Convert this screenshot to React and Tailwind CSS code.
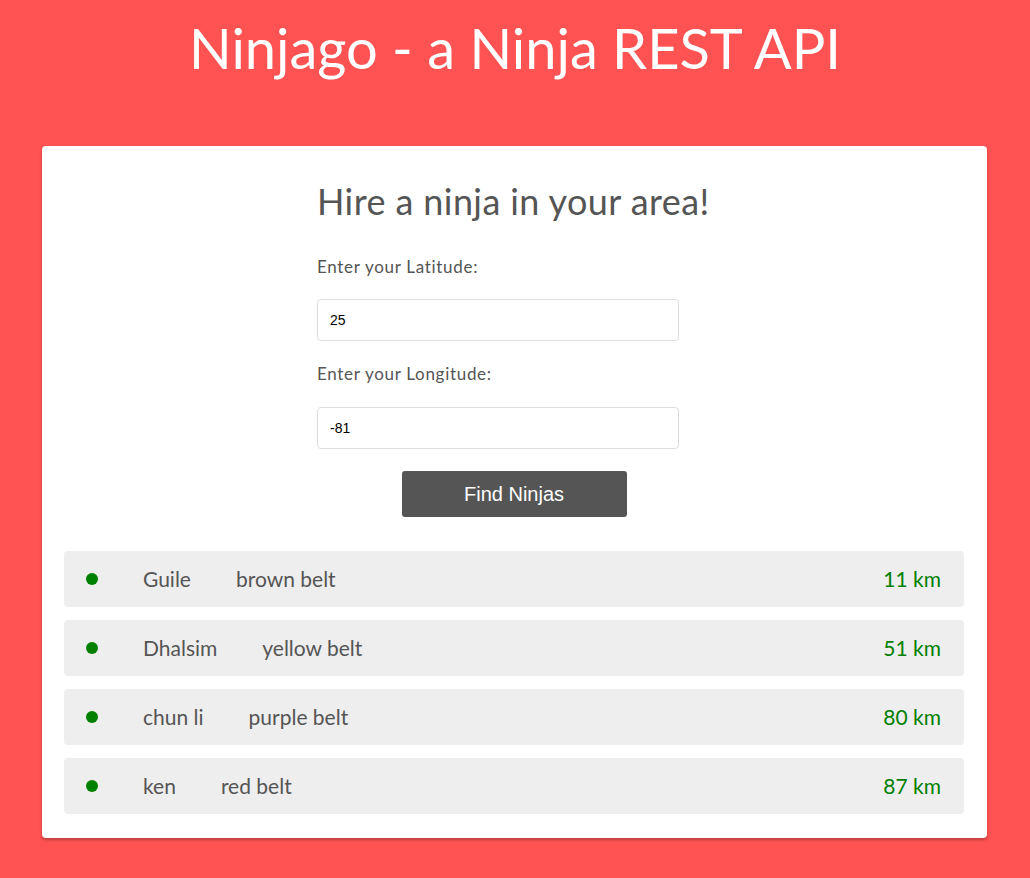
const ninjas = [
  { name: "Guile", rank: "brown belt", dist: "11 km" },
  { name: "Dhalsim", rank: "yellow belt", dist: "51 km" },
  { name: "chun li", rank: "purple belt", dist: "80 km" },
  { name: "ken", rank: "red belt", dist: "87 km" },
];

export default function App() {
  return (
    <div className="min-h-screen bg-[#ff5252] pt-[12px] pb-[40px] font-['Lato',sans-serif]">
      <h1 className="text-center text-white text-[56px] leading-[72px] font-normal">
        Ninjago - a Ninja REST API
      </h1>

      <div className="ml-[42px] mt-[62px] w-[945px] bg-white rounded-[4px] shadow-[0_2px_3px_rgba(0,0,0,0.25)] pl-[22px] pr-[23px] pt-[28px] pb-[24px]">
        {/* form */}
        <div className="mx-auto w-[400px] pl-[3px]">
          <h2 className="text-[36px] leading-[54px] tracking-[0.4px] text-[#555]">Hire a ninja in your area!</h2>
          <label className="block mt-[29px] text-[17px] leading-[20px] tracking-[0.7px] text-[#555]">Enter your Latitude:</label>
          <input
            defaultValue="25"
            className="mt-[22px] block w-[362px] h-[42px] px-[12px] border border-[#ddd] rounded-[4px] text-[14px] text-black font-['Liberation_Sans',sans-serif] outline-none"
          />
          <label className="block mt-[23px] text-[17px] leading-[20px] tracking-[0.7px] text-[#555]">Enter your Longitude:</label>
          <input
            defaultValue="-81"
            className="mt-[23px] block w-[362px] h-[42px] px-[12px] border border-[#ddd] rounded-[4px] text-[14px] text-black font-['Liberation_Sans',sans-serif] outline-none"
          />
        </div>
        <div className="flex justify-center mt-[22px]">
          <button className="w-[225px] h-[46px] bg-[#555] text-white rounded-[3px] text-[20px] font-['Liberation_Sans',sans-serif]">
            Find Ninjas
          </button>
        </div>

        {/* results */}
        <ul className="mt-[34px] flex flex-col gap-[13px]">
          {ninjas.map((n) => (
            <li key={n.name} className="h-[56px] bg-[#eee] rounded-[4px] flex items-center pl-[22px] pr-[23px] text-[21px] text-[#555]">
              <span className="w-[12px] h-[12px] rounded-full bg-[#008000]" />
              <span className="ml-[45px]">{n.name}</span>
              <span className="ml-[45px]">{n.rank}</span>
              <span className="ml-auto text-[#008000]">{n.dist}</span>
            </li>
          ))}
        </ul>
      </div>
    </div>
  );
}
